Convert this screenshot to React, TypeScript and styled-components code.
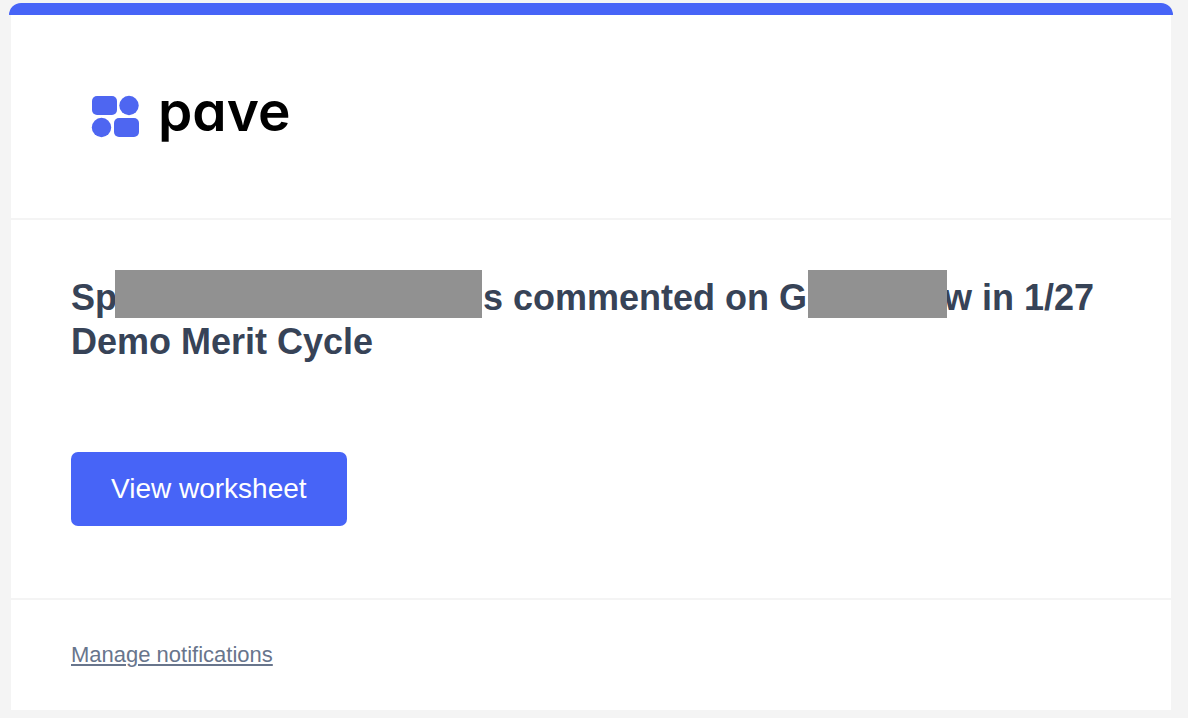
import React from 'react';
import styled, { createGlobalStyle } from 'styled-components';

const GlobalStyle = createGlobalStyle`
  body {
    margin: 0;
    background: #f4f4f4;
    font-family: 'Liberation Sans', Helvetica, Arial, sans-serif;
  }
`;

const Page = styled.div`
  padding: 3px 15px 8px 9px;
`;

const AccentBar = styled.div`
  height: 12px;
  background: #4764f7;
  border-radius: 14px 14px 0 0;
`;

const Card = styled.main`
  margin: 0 2px;
  background: #fff;
`;

const Header = styled.header`
  padding: 80px;
  border-bottom: 2px solid #f4f4f4;
`;

const Logo = styled.div`
  display: flex;
  align-items: flex-start;
  gap: 18px;
`;

const LogoMark = styled.svg`
  display: block;
  width: 49px;
  height: 43px;
`;

const Wordmark = styled.span`
  font-family: Inter, sans-serif;
  font-size: 55px;
  font-weight: 600;
  line-height: 32px;
  font-feature-settings: 'cv11';
  color: #000;
`;

const Message = styled.section`
  padding: 56px 60px 72px;
  border-bottom: 2px solid #f4f4f4;
`;

const Title = styled.h1`
  margin: 0 0 88px;
  font-size: 36px;
  font-weight: 700;
  line-height: 44px;
  color: #374357;
`;

const Redaction = styled.span<{ $width: number; $before: number; $after: number }>`
  position: relative;
  display: inline-block;
  vertical-align: top;
  width: ${({ $width }) => $width}px;
  height: 48px;
  margin: -6px ${({ $after }) => $after}px 2px ${({ $before }) => $before}px;
  background: #919191;
`;

const PrimaryButton = styled.button`
  display: block;
  padding: 21px 40px;
  border: 0;
  border-radius: 7px;
  background: #4764f7;
  color: #fff;
  font-family: inherit;
  font-size: 28px;
  line-height: 32px;
  cursor: pointer;
`;

const Footer = styled.footer`
  padding: 40px 60px;
  font-size: 22px;
  line-height: 30px;
`;

const FooterLink = styled.a`
  color: #68758c;
  text-decoration: underline;
  text-decoration-thickness: 2px;
  text-underline-offset: 2px;
`;

export default function App() {
  return (
    <>
      <GlobalStyle />
      <Page>
        <AccentBar />
        <Card>
          <Header>
            <Logo>
              <LogoMark viewBox="0 0 49 43" fill="#4e66f1" aria-hidden="true">
                <rect x="1" y="1" width="25" height="19" rx="5" />
                <circle cx="38" cy="10.500" r="9.700" />
                <circle cx="10.500" cy="32.500" r="9.700" />
                <rect x="23" y="23" width="25" height="19" rx="5" />
              </LogoMark>
              <Wordmark>pave</Wordmark>
            </Logo>
          </Header>
          <Message>
            <Title>
              Sp
              <Redaction $width={367} $before={-2} $after={1} />s commented on G
              <Redaction $width={139} $before={1} $after={-3} />w in 1/27 Demo Merit Cycle
            </Title>
            <PrimaryButton type="button">View worksheet</PrimaryButton>
          </Message>
          <Footer>
            <FooterLink href="#notifications">Manage notifications</FooterLink>
          </Footer>
        </Card>
      </Page>
    </>
  );
}
